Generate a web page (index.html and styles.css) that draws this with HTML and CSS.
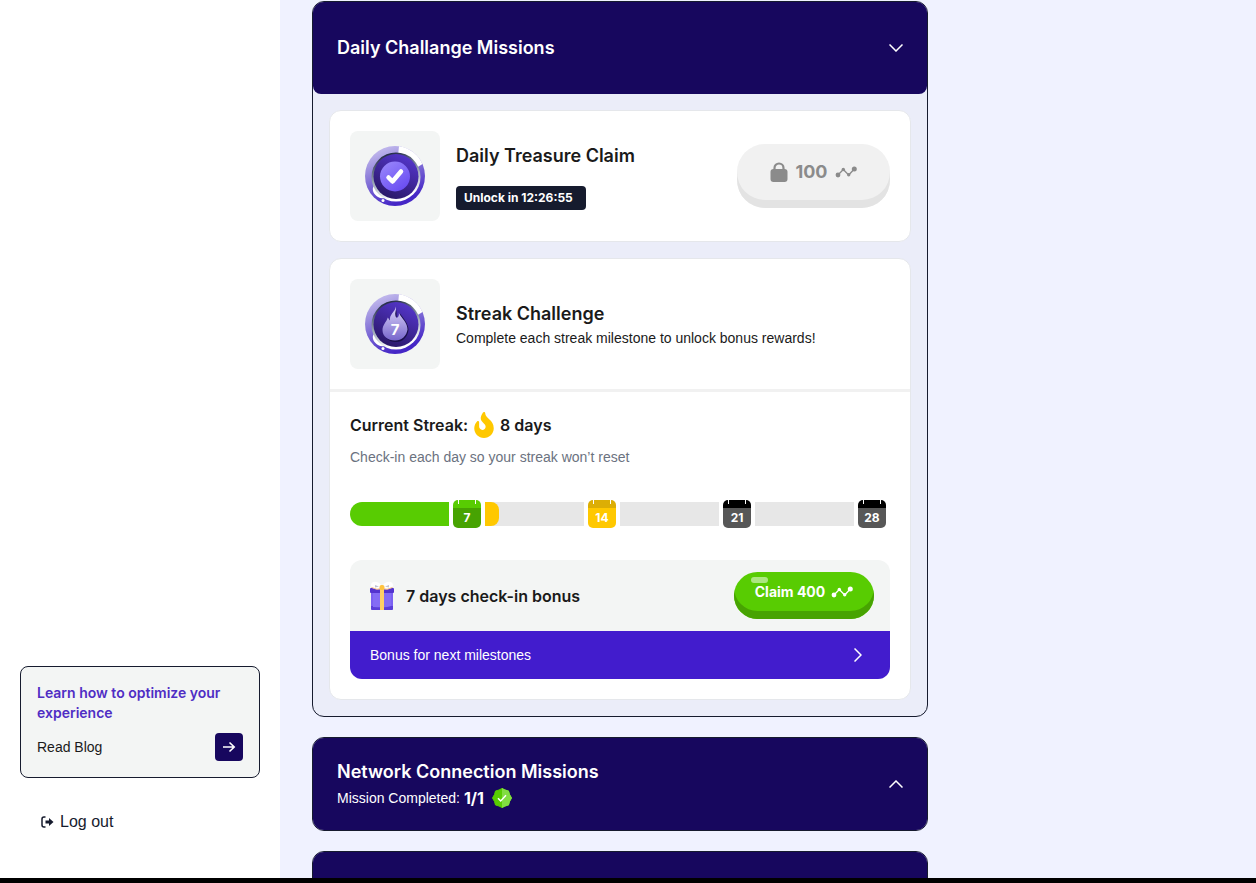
FILE: index.html
```html
<!DOCTYPE html>
<html lang="en">
  <head>
    <meta charset="UTF-8" />
    <meta name="viewport" content="width=device-width, initial-scale=1.0" />
    <title>Missions</title>
    <link rel="stylesheet" href="styles.css">
  </head>
  <body>
    <!-- Shared shapes -->
    <svg class="sprite" width="0" height="0" aria-hidden="true">
      <defs>
        <linearGradient id="ring" x1="0" y1="0" x2="0.4" y2="1">
          <stop offset="0" stop-color="#d3cdf3" />
          <stop offset="0.45" stop-color="#9283db" />
          <stop offset="1" stop-color="#4527c6" />
        </linearGradient>
        <linearGradient id="rim" x1="0.3" y1="0" x2="0.6" y2="1">
          <stop offset="0" stop-color="#1c2340" />
          <stop offset="0.5" stop-color="#99a6b4" />
          <stop offset="0.9" stop-color="#ffffff" />
        </linearGradient>
        <linearGradient id="disc" x1="0.8" y1="0" x2="0.3" y2="1">
          <stop offset="0" stop-color="#5637cf" />
          <stop offset="1" stop-color="#291766" />
        </linearGradient>
        <linearGradient id="coin" x1="0.1" y1="0" x2="0.8" y2="1">
          <stop offset="0" stop-color="#9a88fb" />
          <stop offset="1" stop-color="#674af2" />
        </linearGradient>
        <linearGradient id="ember" x1="0.5" y1="0" x2="0.5" y2="1">
          <stop offset="0" stop-color="#ddd6fa" />
          <stop offset="1" stop-color="#7665cb" />
        </linearGradient>
      </defs>
      <symbol id="medal" viewBox="0 0 60 60">
        <circle cx="30" cy="30" r="30" fill="url(#ring)" />
        <path d="M34 0.3A30 30 0 0 1 57.500 18L48 24L33 10Z" fill="#fff" />
        <path d="M9 40C6 43 9 49 13 51Q16 53 20 52L18 44Z" fill="#fff" />
        <circle cx="31" cy="31" r="24.500" fill="url(#rim)" />
        <circle cx="18" cy="54.500" r="1.500" fill="#fff" />
        <circle cx="31" cy="30.500" r="22.500" fill="url(#disc)" />
      </symbol>
      <symbol id="points" viewBox="0 0 22 14">
        <path d="M3 10L8.300 4.500L13.700 10L19.300 4" fill="none" stroke="currentColor" stroke-width="1.300" />
        <circle cx="3" cy="10" r="2.400" fill="currentColor" />
        <circle cx="8.300" cy="4.500" r="1.700" fill="currentColor" />
        <circle cx="13.700" cy="9.800" r="1.700" fill="currentColor" />
        <circle cx="19.300" cy="4" r="2.500" fill="currentColor" />
      </symbol>
    </svg>

    <div class="app">
      <aside class="sidebar">
        <div class="blog-card">
          <p class="blog-title">Learn how to optimize your experience</p>
          <a class="blog-link" href="#">
            Read Blog
            <span class="blog-arrow">
              <svg width="14" height="12" viewBox="0 0 14 12" fill="none" stroke="#fff" stroke-width="1.600">
                <path d="M1 6H12M7.500 1.500L12.200 6L7.500 10.500" />
              </svg>
            </span>
          </a>
        </div>
        <a class="logout" href="#">
          <svg width="13" height="12" viewBox="0 0 13 12">
            <path d="M4.500 1H3Q1 1 1 3V9Q1 11 3 11H4.500" fill="none" stroke="#161b2e" stroke-width="1.500" />
            <path d="M4.500 4.500H8V2L12.500 6L8 10V7.500H4.500Z" fill="#161b2e" />
          </svg>
          Log out
        </a>
      </aside>

      <main class="content">
        <section class="panel">
          <button class="panel-header" type="button" aria-expanded="true">
            <span class="panel-title">Daily Challange Missions</span>
            <svg width="14" height="8" viewBox="0 0 14 8" fill="none" stroke="#fff" stroke-width="1.500">
              <path d="M0.500 0.500L7 7L13.500 0.500" />
            </svg>
          </button>

          <div class="panel-body">
            <article class="card">
              <div class="mission">
                <div class="thumb">
                  <svg width="60" height="60" viewBox="0 0 60 60">
                    <use href="#medal" width="60" height="60" />
                    <circle cx="30" cy="30.500" r="15" fill="url(#coin)" />
                    <path d="M23.500 31.500L27.500 35.500L36 25.500" fill="none" stroke="#fff" stroke-width="4.500" stroke-linecap="round" stroke-linejoin="round" />
                  </svg>
                </div>
                <div class="mission-text">
                  <h3>Daily Treasure Claim</h3>
                  <span class="timer">Unlock in 12:26:55</span>
                </div>
                <button class="locked" type="button" disabled>
                  <svg width="18" height="20" viewBox="0 0 18 20">
                    <path d="M4.500 9V6A4.500 4.500 0 0 1 13.500 6V9" fill="none" stroke="currentColor" stroke-width="2.200" />
                    <rect x="0.500" y="7" width="17" height="13" rx="3" fill="currentColor" />
                  </svg>
                  100
                  <svg width="22" height="14"><use href="#points" /></svg>
                </button>
              </div>
            </article>

            <article class="card">
              <div class="mission">
                <div class="thumb">
                  <svg width="60" height="60" viewBox="0 0 60 60">
                    <use href="#medal" width="60" height="60" />
                    <path d="M31 15C32 19 31 21 32 25C35 24 35.500 22 35 19.500C39 25 43.500 30 43.500 36C42.500 43.500 37.500 48 31 48C23.500 48 18.500 43 18.500 37C18.500 32 22 29 23 26C25 27 30 20 31 15Z" fill="#1a104a" />
                    <path d="M31 12.500C31.500 16 29.500 19 30.500 22C31.500 25.500 34.500 23 33.800 19C37.500 25 42.500 29 42.500 35.500C41.500 42 37 46.500 30 46.500C22.500 46.500 17.500 42 17.500 36C17.500 31 21.500 28 22.800 23.500L25 26.500C24 20.500 30 18 31 12.500Z" fill="url(#ember)" />
                    <text class="medal-number" x="30" y="41" text-anchor="middle">7</text>
                  </svg>
                </div>
                <div class="mission-text mission-text-tight">
                  <h3>Streak Challenge</h3>
                  <p>Complete each streak milestone to unlock bonus rewards!</p>
                </div>
              </div>

              <div class="streak">
                <div class="streak-current">
                  Current Streak:
                  <svg width="20" height="26" viewBox="0 0 384 512">
                    <path d="M216 24C216 0 185 -9 172 11C48 192 224 200 224 288C224 324 195 352 159 352C124 352 96 322 96 287V202C96 180 70 169 55 185C28 213 0 261 0 320C0 426 86 512 192 512S384 426 384 320C384 150 216 127 216 24Z" fill="#ffc800" />
                  </svg>
                  8 days
                </div>
                <p class="streak-note">Check-in each day so your streak won’t reset</p>

                <div class="track">
                  <div class="segment segment-start"><div class="fill fill-green" style="width: 100%"></div></div>
                  <div class="day day-green">7</div>
                  <div class="segment"><div class="fill fill-yellow" style="width: 14%"></div></div>
                  <div class="day day-yellow">14</div>
                  <div class="segment"></div>
                  <div class="day">21</div>
                  <div class="segment"></div>
                  <div class="day">28</div>
                </div>

                <div class="bonus">
                  <div class="bonus-row">
                    <svg width="24" height="30" viewBox="0 0 24 30">
                      <rect x="1" y="10" width="22" height="19" rx="1.500" fill="#7b61f2" />
                      <path d="M1 25H23V27.500Q23 29 21.500 29H2.500Q1 29 1 27.500Z" fill="#5b3fd8" />
                      <path d="M3 12H21V25Q17 27 3 26Z" fill="#846cf5" />
                      <rect x="0" y="7" width="24" height="5" rx="1" fill="#5334cf" />
                      <path d="M11 8C5 9 1 7 1 4C1.500-0.500 8 0 11 4Z" fill="#fff" />
                      <path d="M13 8C19 9 23 7 23 4C22.500-0.500 16 0 13 4Z" fill="#fff" />
                      <path d="M5 4L9 5.500L5 6.500ZM19 4L15 5.500L19 6.500Z" fill="#bfc1d0" />
                      <path d="M1.500 6.500Q7 9.500 12 7.500Q17 9.500 22.500 6.500" fill="none" stroke="#f6b983" />
                      <rect x="10" y="6" width="4" height="23" fill="#ffd166" />
                      <rect x="9.500" y="4" width="5" height="5" rx="2" fill="#ffc340" />
                    </svg>
                    <h4>7 days check-in bonus</h4>
                    <button class="claim" type="button">
                      Claim 400
                      <svg width="22" height="14"><use href="#points" /></svg>
                    </button>
                  </div>
                  <button class="bonus-next" type="button">
                    Bonus for next milestones
                    <svg width="8" height="14" viewBox="0 0 8 14" fill="none" stroke="#fff" stroke-width="1.500">
                      <path d="M0.500 0.500L7 7L0.500 13.500" />
                    </svg>
                  </button>
                </div>
              </div>
            </article>
          </div>
        </section>

        <section class="panel">
          <button class="panel-header" type="button" aria-expanded="false">
            <span>
              <span class="panel-title">Network Connection Missions</span>
              <span class="panel-status">
                Mission Completed: <b>1/1</b>
                <svg width="20" height="20" viewBox="0 0 20 20">
                  <path d="M10 0.500L13 2L16.500 3L17.500 6.500L19.500 10L17.500 13.500L16.500 17L13 18L10 19.500L7 18L3.500 17L2.500 13.500L0.500 10L2.500 6.500L3.500 3L7 2Z" fill="#58cc02" stroke="#58cc02" stroke-linejoin="round" />
                  <path d="M10 0L13 1.600L16.800 2.700L18 6.400L20 10L18 13.600L16.800 17.300L13 18.400L10 20Z" fill="#82dd42" />
                  <path d="M6 10.200L8.700 13L14 7.300" fill="none" stroke="#fff" stroke-width="1.500" />
                </svg>
              </span>
            </span>
            <svg width="14" height="8" viewBox="0 0 14 8" fill="none" stroke="#fff" stroke-width="1.500">
              <path d="M0.500 7.500L7 1L13.500 7.500" />
            </svg>
          </button>
        </section>

        <section class="panel">
          <button class="panel-header" type="button" aria-expanded="false" aria-label="More missions"></button>
        </section>
      </main>
    </div>
  </body>
</html>
```
FILE: styles.css
```css
* {
  margin: 0;
  padding: 0;
  box-sizing: border-box;
}

body {
  font-family: "Liberation Sans", Arial, sans-serif;
  font-size: 14px;
  line-height: 20px;
  color: #1a1a1a;
  height: 100vh;
  overflow: hidden;
  border-bottom: 5px solid #000;
}

button {
  font: inherit;
  border: none;
  cursor: pointer;
}

a {
  color: inherit;
  text-decoration: none;
}

svg {
  display: block;
  flex-shrink: 0;
}

.sprite {
  position: absolute;
}

/* Headings and numbers */
h3,
h4,
.blog-title,
.panel-title,
.panel-status b,
.medal-number,
.timer,
.locked,
.claim,
.streak-current,
.day {
  font-family: Inter, "Liberation Sans", sans-serif;
}

.app {
  display: flex;
  height: 100%;
}

/* Sidebar */
.sidebar {
  width: 280px;
  flex-shrink: 0;
  padding: 20px 20px 44px;
  display: flex;
  flex-direction: column;
  justify-content: flex-end;
  gap: 32px;
  background: #fff;
}

.blog-card {
  padding: 16px;
  border: 1px solid #161b2e;
  border-radius: 8px;
  background: #f3f5f4;
}

.blog-title {
  font-weight: 600;
  color: #4f2dc4;
}

.blog-link {
  display: flex;
  justify-content: space-between;
  align-items: center;
  margin-top: 10px;
}

.blog-arrow {
  width: 28px;
  height: 28px;
  display: flex;
  justify-content: center;
  align-items: center;
  border-radius: 4px;
  background: #17075e;
}

.logout {
  display: flex;
  align-items: center;
  gap: 6px;
  padding-left: 21px;
  font-size: 16px;
  line-height: 24px;
  color: #161b2e;
}

/* Mission panels */
.content {
  flex: 1;
  padding: 1px 32px 0;
  overflow: hidden;
  background: #f0f2ff;
}

.panel {
  max-width: 616px;
  margin-bottom: 20px;
  border: 1px solid #161b2e;
  border-radius: 12px;
  overflow: hidden;
  background: #ebedf9;
}

.panel-header {
  width: 100%;
  min-height: 92px;
  padding: 0 24px;
  display: flex;
  justify-content: space-between;
  align-items: center;
  border-radius: 0 0 8px 8px;
  background: #17075e;
  color: #fff;
  text-align: left;
}

.panel-title {
  display: block;
  font-size: 18px;
  line-height: 28px;
  font-weight: 600;
}

.panel-status {
  display: flex;
  align-items: center;
  gap: 4px;
  line-height: 24px;
}

.panel-status b {
  font-size: 16px;
}

.panel-status svg {
  margin-left: 4px;
}

.panel-body {
  padding: 16px;
  display: flex;
  flex-direction: column;
  gap: 16px;
}

.card {
  border: 1px solid #e5e7eb;
  border-radius: 12px;
  background: #fff;
}

.mission {
  display: flex;
  align-items: center;
  gap: 16px;
  padding: 20px;
}

.thumb {
  width: 90px;
  height: 90px;
  display: flex;
  justify-content: center;
  align-items: center;
  border-radius: 8px;
  background: #f3f5f4;
}

.medal-number {
  font-size: 15px;
  font-weight: 700;
  fill: #fff;
}

.mission-text {
  flex: 1;
  display: flex;
  flex-direction: column;
  align-items: flex-start;
  gap: 16px;
}

.mission-text-tight {
  gap: 0;
}

h3 {
  font-size: 18px;
  line-height: 28px;
  font-weight: 600;
}

.timer {
  width: 130px;
  padding: 0 8px;
  border-radius: 4px;
  background: #161b2e;
  color: #fff;
  font-size: 12px;
  line-height: 24px;
  font-weight: 700;
}

.locked,
.claim {
  display: flex;
  justify-content: center;
  align-items: center;
}

.locked {
  width: 153px;
  height: 64px;
  gap: 7px;
  padding-bottom: 8px;
  border-radius: 28px;
  background: #f1f1f1;
  box-shadow: inset 0 -8px 0 #e3e3e3;
  color: #8b8b8b;
  font-size: 18px;
  font-weight: 700;
  cursor: default;
}

/* Streak progress */
.streak {
  padding: 20px;
  border-top: 3px solid #f1f1f1;
}

.streak-current {
  display: flex;
  align-items: center;
  gap: 6px;
  font-size: 16px;
  line-height: 26px;
  font-weight: 600;
}

.streak-note {
  margin-top: 9px;
  color: #6b7280;
}

.track {
  display: flex;
  align-items: center;
  gap: 4px;
  margin: 33px 4px 32px 0;
}

.segment {
  flex: 1;
  height: 24px;
  overflow: hidden;
  background: #e7e7e7;
}

.segment-start {
  border-radius: 12px 0 0 12px;
}

.fill {
  height: 100%;
}

.fill-green {
  background: #58cc02;
}

.fill-yellow {
  border-radius: 0 8px 8px 0;
  background: #ffc800;
}

/* Calendar tile, the two white ticks are its binding */
.day {
  width: 28px;
  height: 28px;
  padding-top: 8px;
  border-radius: 5px;
  background:
    linear-gradient(#fff, #fff) 5px 0 / 1px 4px no-repeat,
    linear-gradient(#fff, #fff) 22px 0 / 1px 4px no-repeat,
    linear-gradient(#000, #000) 0 0 / 100% 8px no-repeat,
    #575757;
  color: #fff;
  font-size: 12px;
  font-weight: 700;
  text-align: center;
}

.day-green {
  background:
    linear-gradient(#fff, #fff) 5px 0 / 1px 4px no-repeat,
    linear-gradient(#fff, #fff) 22px 0 / 1px 4px no-repeat,
    linear-gradient(#58cc02, #58cc02) 0 0 / 100% 8px no-repeat,
    #47a302;
}

.day-yellow {
  background:
    linear-gradient(#fff, #fff) 5px 0 / 1px 4px no-repeat,
    linear-gradient(#fff, #fff) 22px 0 / 1px 4px no-repeat,
    linear-gradient(#dcae05, #dcae05) 0 0 / 100% 8px no-repeat,
    #ffc800;
}

/* Bonus box */
.bonus {
  border-radius: 12px;
  overflow: hidden;
  background: #f3f5f4;
}

.bonus-row {
  display: flex;
  align-items: center;
  gap: 12px;
  padding: 12px 16px 12px 20px;
}

h4 {
  flex: 1;
  font-size: 16px;
  line-height: 24px;
  font-weight: 600;
}

.claim {
  position: relative;
  width: 140px;
  height: 47px;
  gap: 6px;
  padding-bottom: 8px;
  border-radius: 24px;
  background: #58cc02;
  box-shadow: inset 0 -8px 0 #47a302;
  color: #fff;
  font-weight: 700;
}

/* Highlight on the button */
.claim::before {
  content: "";
  position: absolute;
  top: 5px;
  left: 17px;
  width: 17px;
  height: 6px;
  border-radius: 3px;
  background: rgba(255, 255, 255, 0.5);
}

.bonus-next {
  width: 100%;
  height: 48px;
  padding: 0 28px 0 20px;
  display: flex;
  justify-content: space-between;
  align-items: center;
  background: #421ccd;
  color: #fff;
}
```
